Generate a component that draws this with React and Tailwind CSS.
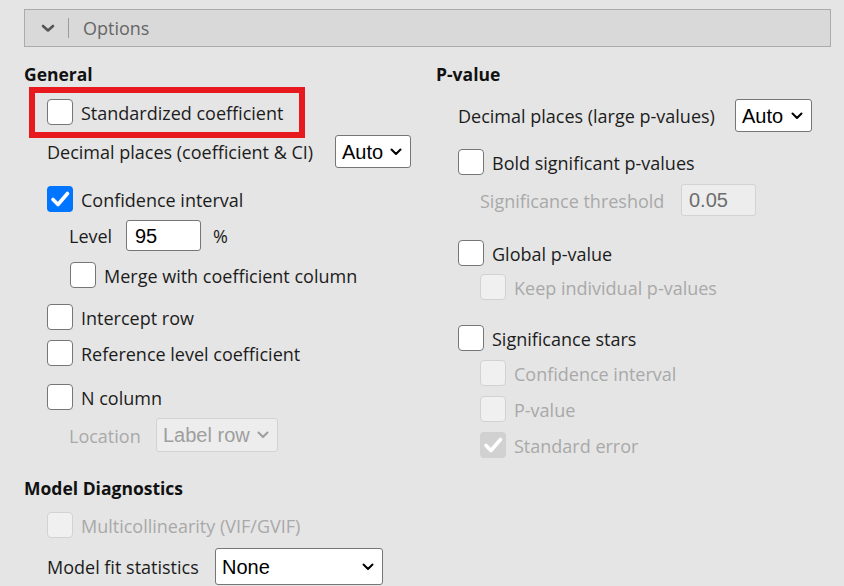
import React from "react";

const FONT = { fontFamily: '"Open Sans", "Noto Sans", sans-serif' };
const ARIAL = { fontFamily: '"Liberation Sans", Arial, sans-serif' };

function Box({ state = "off" }) {
  if (state === "on")
    return (
      <span className="w-[26px] h-[26px] rounded-[4px] bg-[#0075ff] flex items-center justify-center shrink-0">
        <svg width="26" height="26" viewBox="0 0 26 26">
          <path d="M6 13.5 L11 18.5 L20.5 7.5" fill="none" stroke="white" strokeWidth="3.6" strokeLinecap="round" strokeLinejoin="round" />
        </svg>
      </span>
    );
  if (state === "dischecked")
    return (
      <span className="w-[26px] h-[26px] rounded-[4px] bg-[#d1d1d1] flex items-center justify-center shrink-0">
        <svg width="26" height="26" viewBox="0 0 26 26">
          <path d="M6 13.5 L11 18.5 L20.5 7.5" fill="none" stroke="white" strokeWidth="3.6" strokeLinecap="round" strokeLinejoin="round" />
        </svg>
      </span>
    );
  if (state === "dis")
    return <span className="w-[26px] h-[26px] rounded-[4px] border-[1.5px] border-[#d2d2d2] bg-[#f0f0f0] shrink-0" />;
  return <span className="w-[26px] h-[26px] rounded-[4px] border-[1.5px] border-[#767676] bg-white shrink-0" />;
}

function Check({ state, label, className = "", disabled }) {
  const dis = disabled || state === "dis" || state === "dischecked";
  return (
    <div className={`flex items-center h-[26px] gap-[8px] ${className}`}>
      <Box state={state} />
      <span className={`text-[18px] leading-none pt-[1px] ${dis ? "text-[#a9a9a9]" : "text-[#1c1c1c]"}`}>{label}</span>
    </div>
  );
}

function Chev({ color = "#000" }) {
  return (
    <svg width="12" height="8" viewBox="0 0 12 8">
      <path d="M1.5 1.5 L6 6 L10.5 1.5" fill="none" stroke={color} strokeWidth="2" strokeLinecap="round" strokeLinejoin="round" />
    </svg>
  );
}

function Select({ value, className = "", disabled }) {
  return (
    <div
      style={ARIAL}
      className={`flex items-center justify-between rounded-[3px] border pl-[6px] pr-[8px] text-[20px] ${
        disabled ? "bg-[#ededed] border-[#d3d3d3] text-[#9e9e9e]" : "bg-white border-[#767676] text-black"
      } ${className}`}
    >
      <span>{value}</span>
      <Chev color={disabled ? "#9e9e9e" : "#000"} />
    </div>
  );
}

const LBL = "text-[18px] leading-none pt-[1px] text-[#1c1c1c]";
const LBL_DIS = "text-[18px] leading-none pt-[1px] text-[#a9a9a9]";

export default function App() {
  return (
    <div style={FONT} className="w-[844px] h-[586px] bg-[#e5e5e5] overflow-hidden pt-[9px] pl-[24px] pr-[13px]">
      <div className="h-[38px] bg-[#d9d9d9] border border-[#ababab] flex items-center">
        <div className="w-[43px] flex justify-center pl-[2px]">
          <svg width="14" height="9" viewBox="0 0 14 9">
            <path d="M2 2 L7 6.5 L12 2" fill="none" stroke="#555" strokeWidth="2.6" strokeLinecap="round" strokeLinejoin="round" />
          </svg>
        </div>
        <div className="w-px h-[20px] bg-[#9a9a9a]" />
        <span className="ml-[14px] text-[18px] text-[#666]">Options</span>
      </div>

      <div className="flex">
        {/* Left column */}
        <div className="w-[412px] flex flex-col">
          <div className="mt-[16px] h-[22px] flex items-center text-[17.5px] font-bold text-[#111]">General</div>

          <div className="relative mt-[14px] pl-[23px]">
            <Check state="off" label="Standardized coefficient" />
            <div className="absolute left-[5px] top-[-12px] w-[276px] h-[51px] border-[6px] border-[#e8191e] pointer-events-none" />
          </div>

          <div className="mt-[10px] pl-[23px] flex items-center h-[33px]">
            <span className={`${LBL} w-[288px]`}>Decimal places (coefficient &amp; CI)</span>
            <Select value="Auto" className="w-[76px] h-[33px]" />
          </div>

          <Check state="on" label="Confidence interval" className="mt-[18px] ml-[23px]" />

          <div className="mt-[8px] ml-[45px] flex items-center h-[31px]">
            <span className={`${LBL} w-[57px]`}>Level</span>
            <div style={ARIAL} className="w-[75px] h-[31px] bg-white border border-[#767676] rounded-[3px] flex items-center pl-[8px] text-[20px]">95</div>
            <span className={`${LBL} ml-[12px]`}>%</span>
          </div>

          <Check state="off" label="Merge with coefficient column" className="mt-[11px] ml-[46px]" />

          <Check state="off" label="Intercept row" className="mt-[16px] ml-[23px]" />
          <Check state="off" label="Reference level coefficient" className="mt-[10px] ml-[23px]" />
          <Check state="off" label="N column" className="mt-[18px] ml-[23px]" />

          <div className="mt-[8px] ml-[45px] flex items-center h-[34px]">
            <span className={`${LBL_DIS} w-[87px]`}>Location</span>
            <Select value="Label row" disabled className="w-[122px] h-[34px]" />
          </div>

          <div className="mt-[25px] h-[22px] flex items-center text-[17.5px] font-bold text-[#111]">Model Diagnostics</div>

          <Check state="dis" label="Multicollinearity (VIF/GVIF)" className="mt-[13px] ml-[23px]" />

          <div className="mt-[10px] ml-[23px] flex items-center h-[37px]">
            <span className={`${LBL} w-[168px]`}>Model fit statistics</span>
            <Select value="None" className="w-[168px] h-[37px]" />
          </div>
        </div>

        {/* Right column */}
        <div className="flex flex-col">
          <div className="mt-[16px] h-[22px] flex items-center text-[17.5px] font-bold text-[#111]">P-value</div>

          <div className="mt-[14px] pl-[22px] flex items-center h-[33px]">
            <span className={`${LBL} w-[277px]`}>Decimal places (large p-values)</span>
            <Select value="Auto" className="w-[77px] h-[33px]" />
          </div>

          <Check state="off" label="Bold significant p-values" className="mt-[17px] ml-[22px]" />

          <div className="mt-[9px] ml-[44px] flex items-center h-[32px]">
            <span className={`${LBL_DIS} w-[201px]`}>Significance threshold</span>
            <div style={ARIAL} className="w-[75px] h-[32px] bg-[#ededed] border border-[#d3d3d3] rounded-[3px] flex items-center pl-[7px] text-[20px] text-[#6d6d6d]">0.05</div>
          </div>

          <Check state="off" label="Global p-value" className="mt-[24px] ml-[22px]" />
          <Check state="dis" label="Keep individual p-values" className="mt-[8px] ml-[44px]" />

          <Check state="off" label="Significance stars" className="mt-[25px] ml-[22px]" />
          <Check state="dis" label="Confidence interval" className="mt-[9px] ml-[44px]" />
          <Check state="dis" label="P-value" className="mt-[10px] ml-[44px]" />
          <Check state="dischecked" label="Standard error" className="mt-[10px] ml-[44px]" />
        </div>
      </div>
    </div>
  );
}
